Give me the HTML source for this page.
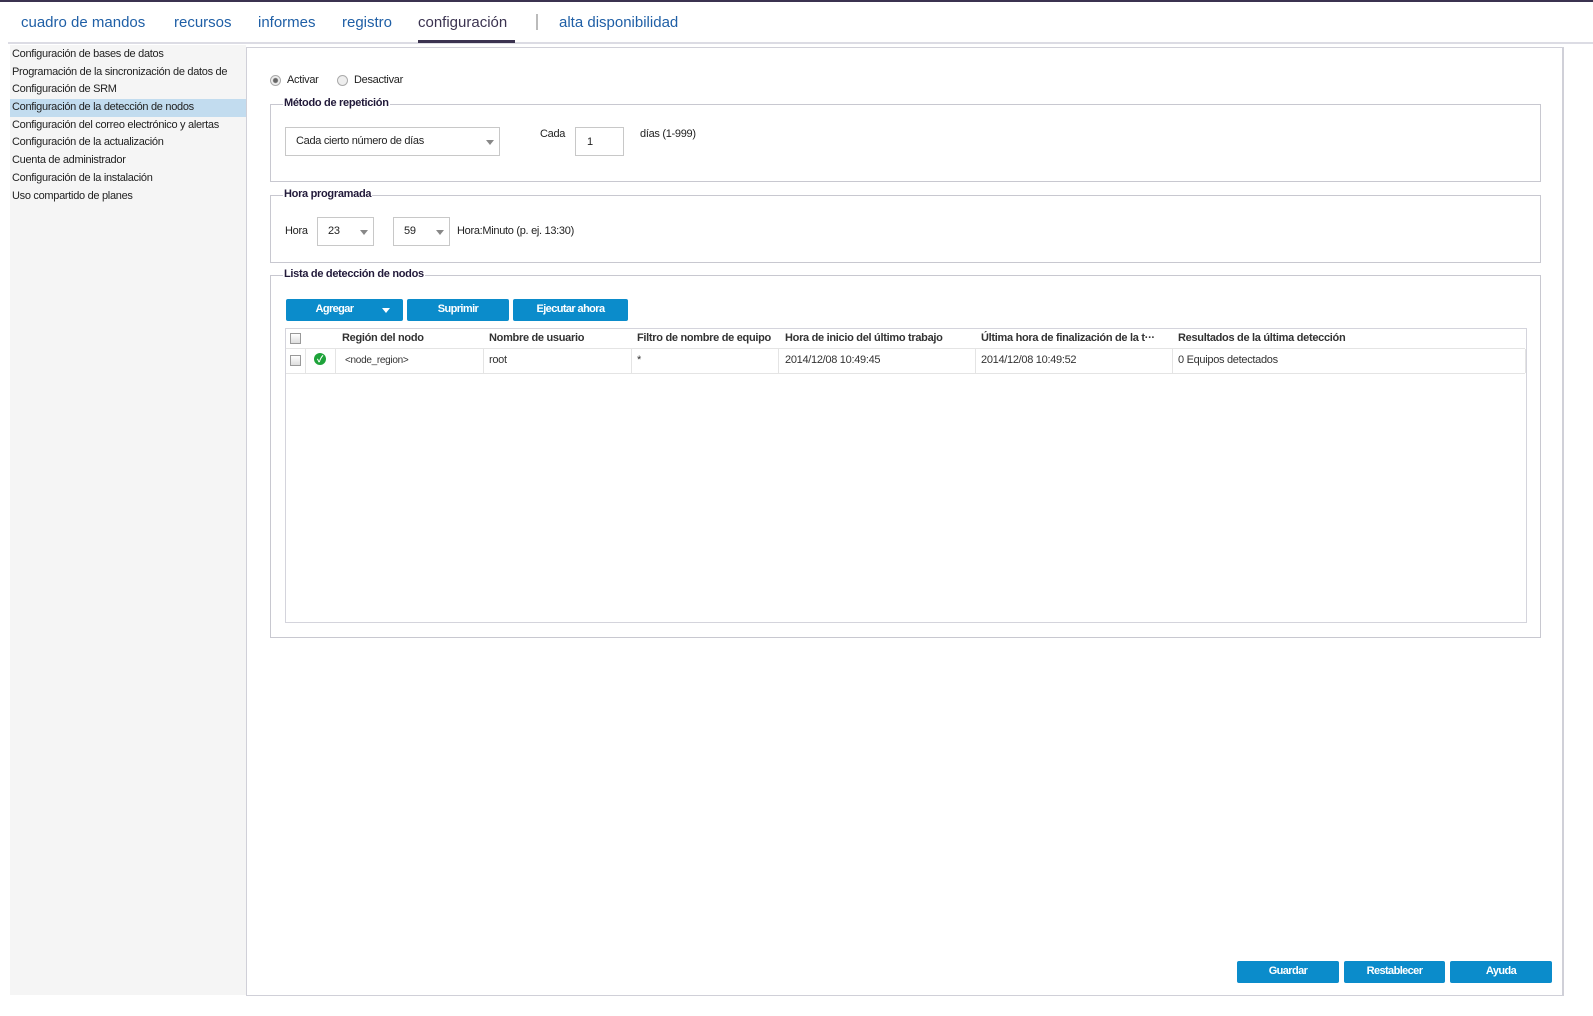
<!DOCTYPE html>
<html><head><meta charset="utf-8"><style>
*{box-sizing:border-box;margin:0;padding:0}
body{width:1593px;height:1016px;background:#fff;font-family:"Liberation Sans","Noto Sans CJK JP",sans-serif;font-size:11px;color:#222;position:relative;overflow:hidden;letter-spacing:-0.3px}
.a{position:absolute;white-space:nowrap}
.nav{font-size:15px;color:#1f5fa6;letter-spacing:0;top:14px}
.side div{height:17.7px;line-height:17.7px;padding-left:2px}
.fs{position:absolute;border:1px solid #c8c8d0;left:270px;width:1271px}
.lg{position:absolute;top:-8px;left:12px;background:#fff;font-weight:bold;color:#221a3a;padding:0 1px;font-size:11px}
.sel{position:absolute;border:1px solid #c8c8c8;background:#fff;height:29px;line-height:27px;padding-left:10px}
.sel:after{content:"";position:absolute;right:5px;top:12px;border-left:4px solid transparent;border-right:4px solid transparent;border-top:5px solid #888}
.btn{position:absolute;background:#0b8ccb;color:#fff;font-weight:bold;text-align:center;height:22px;line-height:21px;border-radius:2px;letter-spacing:-0.6px}
.cb{position:absolute;width:11px;height:11px;border:1px solid #999;background:linear-gradient(#fff,#ddd)}
.th{position:absolute;top:332px;font-weight:bold;color:#333}
.td{position:absolute;top:354px;color:#333}
.vl{position:absolute;top:349px;height:24px;width:1px;background:#e4e4e4}
</style></head><body>
<div class="a" style="left:0;top:0;width:1593px;height:2px;background:#3b3350"></div>
<div class="a nav" style="left:21px">cuadro de mandos</div>
<div class="a nav" style="left:174px">recursos</div>
<div class="a nav" style="left:258px">informes</div>
<div class="a nav" style="left:342px">registro</div>
<div class="a nav" style="left:418px;color:#3b3350">configuración</div>
<div class="a" style="left:536px;top:14px;width:2px;height:16px;background:#bbb"></div>
<div class="a nav" style="left:559px">alta disponibilidad</div>
<div class="a" style="left:8px;top:42px;width:1585px;height:2px;background:#dcdce4"></div>
<div class="a" style="left:418px;top:40px;width:97px;height:3px;background:#3b3350"></div>

<div class="a side" style="left:10px;top:45px;width:236px;height:950px;background:#f5f5f5;padding-top:1px">
<div>Configuración de bases de datos</div>
<div>Programación de la sincronización de datos de</div>
<div>Configuración de SRM</div>
<div style="background:#c2dcef">Configuración de la detección de nodos</div>
<div>Configuración del correo electrónico y alertas</div>
<div>Configuración de la actualización</div>
<div>Cuenta de administrador</div>
<div>Configuración de la instalación</div>
<div>Uso compartido de planes</div>
</div>
<div class="a" style="left:246px;top:47px;width:1318px;height:949px;border:1px solid #d0d0d8;border-right:2px solid #d0d0d8"></div>

<div class="a" style="left:270px;top:75px;width:11px;height:11px;border-radius:50%;border:1px solid #aaa;background:radial-gradient(#666 0 2px,#eee 3px)"></div>
<div class="a" style="left:287px;top:74px">Activar</div>
<div class="a" style="left:337px;top:75px;width:11px;height:11px;border-radius:50%;border:1px solid #aaa;background:#eee"></div>
<div class="a" style="left:354px;top:74px">Desactivar</div>

<div class="fs" style="top:104px;height:78px"><div class="lg">Método de repetición</div></div>
<div class="sel" style="left:285px;top:127px;width:215px">Cada cierto número de días</div>
<div class="a" style="left:540px;top:128px">Cada</div>
<div class="a" style="left:575px;top:127px;width:49px;height:29px;border:1px solid #c8c8c8;padding:8px 0 0 11px">1</div>
<div class="a" style="left:640px;top:128px">días (1-999)</div>

<div class="fs" style="top:195px;height:68px"><div class="lg">Hora programada</div></div>
<div class="a" style="left:285px;top:225px">Hora</div>
<div class="sel" style="left:317px;top:217px;width:57px">23</div>
<div class="sel" style="left:393px;top:217px;width:57px">59</div>
<div class="a" style="left:457px;top:225px">Hora:Minuto (p. ej. 13:30)</div>

<div class="fs" style="top:275px;height:363px"><div class="lg">Lista de detección de nodos</div></div>
<div class="btn" style="left:286px;top:299px;width:117px;padding-right:20px">Agregar<span style="position:absolute;right:13px;top:9px;border-left:4px solid transparent;border-right:4px solid transparent;border-top:5px solid #fff"></span></div>
<div class="btn" style="left:407px;top:299px;width:102px">Suprimir</div>
<div class="btn" style="left:513px;top:299px;width:115px">Ejecutar ahora</div>

<div class="a" style="left:285px;top:328px;width:1242px;height:295px;border:1px solid #d4d4dc"></div>
<div class="a" style="left:286px;top:348px;width:1239px;height:26px;border-top:1px solid #e4e4e4;border-bottom:1px solid #e4e4e4"></div>
<div class="cb" style="left:290px;top:333px"></div>
<div class="th" style="left:342px">Región del nodo</div>
<div class="th" style="left:489px">Nombre de usuario</div>
<div class="th" style="left:637px">Filtro de nombre de equipo</div>
<div class="th" style="left:785px">Hora de inicio del último trabajo</div>
<div class="th" style="left:981px">Última hora de finalización de la t···</div>
<div class="th" style="left:1178px">Resultados de la última detección</div>
<div class="vl" style="left:305px"></div><div class="vl" style="left:335px"></div><div class="vl" style="left:483px"></div><div class="vl" style="left:631px"></div><div class="vl" style="left:778px"></div><div class="vl" style="left:975px"></div><div class="vl" style="left:1172px"></div><div class="vl" style="left:1525px"></div>
<div class="cb" style="left:290px;top:355px"></div>
<div class="a" style="left:314px;top:353px;width:12px;height:12px;border-radius:50%;background:#1ea33a;color:#fff;font-size:9px;line-height:12px;text-align:center;font-weight:bold">✓</div>
<div class="td" style="left:345px;font-size:10px;top:355px">&lt;node_region&gt;</div>
<div class="td" style="left:489px">root</div>
<div class="td" style="left:637px">*</div>
<div class="td" style="left:785px">2014/12/08 10:49:45</div>
<div class="td" style="left:981px">2014/12/08 10:49:52</div>
<div class="td" style="left:1178px">0 Equipos detectados</div>

<div class="btn" style="left:1237px;top:961px;width:102px">Guardar</div>
<div class="btn" style="left:1344px;top:961px;width:101px">Restablecer</div>
<div class="btn" style="left:1450px;top:961px;width:102px">Ayuda</div>
</body></html>
